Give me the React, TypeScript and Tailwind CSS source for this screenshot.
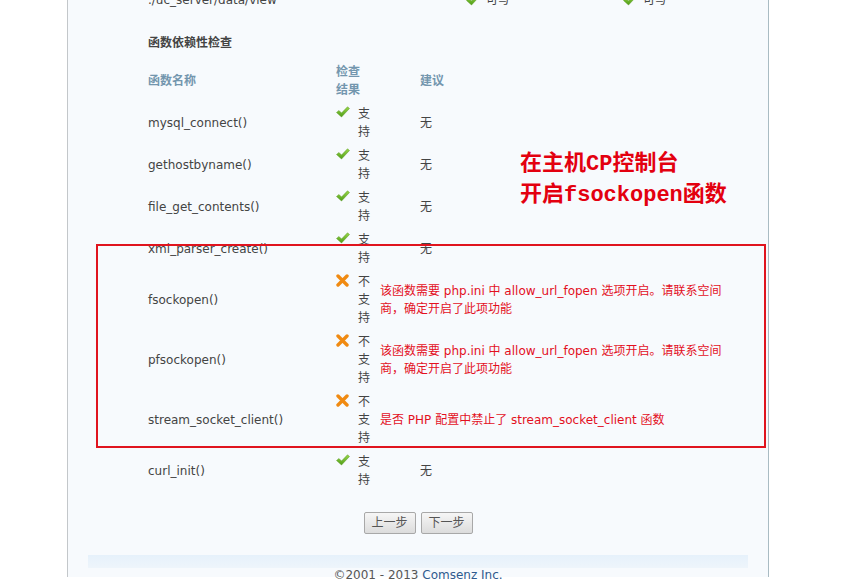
import React from "react";

const font = { fontFamily: '"DejaVu Sans", "Noto Sans CJK SC", sans-serif' };

function Check() {
  return (
    <svg width="14" height="12" viewBox="0 0 14 12" className="block">
      <defs>
        <linearGradient id="gck" x1="0" y1="0" x2="0" y2="1">
          <stop offset="0" stopColor="#9ad84a" />
          <stop offset="1" stopColor="#4e9c16" />
        </linearGradient>
      </defs>
      <path d="M0.5 6.5 L3 4.5 L5.5 7 L11.5 0.8 L13.5 2.5 L5.5 11 Z" fill="url(#gck)" stroke="#5a9a22" strokeWidth="0.5" />
    </svg>
  );
}

function Cross() {
  return (
    <svg width="13" height="13" viewBox="0 0 13 13" className="block">
      <path d="M2 2 L11 11 M11 2 L2 11" stroke="#f08a12" strokeWidth="3.4" strokeLinecap="round" />
    </svg>
  );
}

type Row = { name: string; ok: boolean; tip?: React.ReactNode };

const rows: Row[] = [
  { name: "mysql_connect()", ok: true },
  { name: "gethostbyname()", ok: true },
  { name: "file_get_contents()", ok: true },
  { name: "xml_parser_create()", ok: true },
  {
    name: "fsockopen()",
    ok: false,
    tip: (
      <>
        该函数需要 php.ini 中 allow_url_fopen 选项开启。请联系空间
        <br />
        商，确定开启了此项功能
      </>
    ),
  },
  {
    name: "pfsockopen()",
    ok: false,
    tip: (
      <>
        该函数需要 php.ini 中 allow_url_fopen 选项开启。请联系空间
        <br />
        商，确定开启了此项功能
      </>
    ),
  },
  { name: "stream_socket_client()", ok: false, tip: "是否 PHP 配置中禁止了 stream_socket_client 函数" },
  { name: "curl_init()", ok: true },
];

export default function App() {
  return (
    <div className="relative w-[850px] h-[586px] overflow-hidden bg-white text-[12px] text-[#444]" style={font}>
      <div className="ml-[67px] w-[702px] h-full bg-[#f7fafd] border-l border-l-[#c3c7ca] border-r border-r-[#a9bbc3]">
        {/* previous section tail */}
        <div className="flex items-center h-[18px] mt-[-9px] leading-[18px]">
          <div className="pl-[80px] w-[398px]">./uc_server/data/view</div>
          <div className="w-[20px]"><Check /></div>
          <div className="w-[137px]">可写</div>
          <div className="w-[20px]"><Check /></div>
          <div>可写</div>
        </div>

        <div className="pl-[80px] mt-[25px] leading-[18px] font-bold text-[#444]">函数依赖性检查</div>

        <div className="mt-[8px] pl-[80px] leading-[18px]">
          <div className="grid grid-cols-[188px_44px_1fr] items-center h-[42px] font-bold text-[#7396ae]">
            <div>函数名称</div>
            <div className="w-[26px]">检查结果</div>
            <div className="pl-[40px]">建议</div>
          </div>
          {rows.map((r) => (
            <div
              key={r.name}
              className={`grid grid-cols-[188px_44px_1fr] items-center ${r.ok ? "h-[42px]" : "h-[60px]"}`}
            >
              <div>{r.name}</div>
              <div className="flex">
                <div className="w-[22px] pt-[1px]">{r.ok ? <Check /> : <Cross />}</div>
                <div className="w-[14px] break-all">{r.ok ? "支持" : "不支持"}</div>
              </div>
              {r.ok ? (
                <div className="pl-[40px]">无</div>
              ) : (
                <div className="text-[#e3101e]">{r.tip}</div>
              )}
            </div>
          ))}
        </div>

        <div className="flex justify-center gap-[5px] mt-[20px]">
          <button className="w-[52px] h-[22px] rounded-[2px] border border-[#a8a8a8] bg-gradient-to-b from-[#f6f6f6] to-[#dcdcdc] text-[#555] text-[12px]">
            上一步
          </button>
          <button className="w-[52px] h-[22px] rounded-[2px] border border-[#a8a8a8] bg-gradient-to-b from-[#f6f6f6] to-[#dcdcdc] text-[#555] text-[12px]">
            下一步
          </button>
        </div>

        <div className="mx-[20px] mt-[21px] h-[13px] bg-gradient-to-b from-[#e6f1fb] to-[#eef5fb]" />
        <div className="text-center text-[12px] leading-[18px] mt-[-2px] text-[#555]">
          ©2001 - 2013 <span className="text-[#2f5a8e]">Comsenz Inc.</span>
        </div>
      </div>

      {/* annotation overlay */}
      <div className="absolute left-[96px] top-[244px] w-[670px] h-[204px] border-2 border-[#e0141e]" />
      <div
        className="absolute left-[520px] top-[149px] text-[22px] leading-[31px] font-bold text-[#e3000f]"
        style={{ fontFamily: '"Liberation Mono", "Noto Sans CJK SC", monospace' }}
      >
        在主机CP控制台
        <br />
        开启fsockopen函数
      </div>
    </div>
  );
}
